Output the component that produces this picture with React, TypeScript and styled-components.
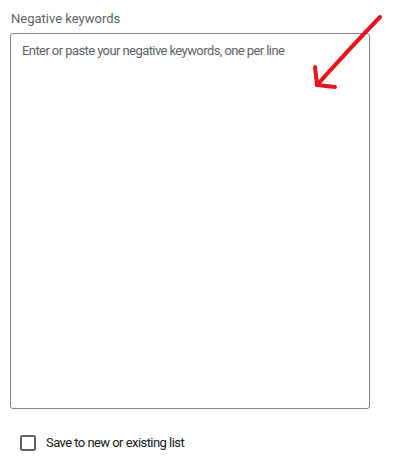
import styled, { createGlobalStyle } from "styled-components";

const GlobalStyle = createGlobalStyle`
  html, body {
    margin: 0;
    padding: 0;
    background: #ffffff;
    font-family: Roboto, "Liberation Sans", Arial, sans-serif;
  }
`;

const Page = styled.div`
  position: relative;
  width: 402px;
  height: 469px;
  overflow: hidden;
  background: #fff;
`;

const Field = styled.div`
  display: flex;
  flex-direction: column;
  padding: 11px 0 0 10px;
`;

const Label = styled.label`
  font-size: 13px;
  line-height: 16px;
  color: #5f6368;
  margin: 0 0 6px 1px;
`;

const TextArea = styled.textarea`
  box-sizing: border-box;
  width: 360px;
  height: 376px;
  margin: 0;
  padding: 9px 11px;
  border: 1px solid #80868b;
  border-radius: 3px;
  font-family: Roboto, "Liberation Sans", Arial, sans-serif;
  font-size: 13px;
  line-height: 16px;
  letter-spacing: -0.58px;
  color: #202124;
  resize: none;
  outline: none;

  &::placeholder {
    color: #5f6368;
    opacity: 1;
  }
`;

const CheckRow = styled.label`
  display: flex;
  align-items: center;
  gap: 10px;
  margin: 26px 0 0 20px;
  cursor: pointer;
`;

const Box = styled.span<{ $checked?: boolean }>`
  box-sizing: border-box;
  width: 16px;
  height: 16px;
  border: 2px solid #5f6368;
  border-radius: 2px;
  background: ${(p) => (p.$checked ? "#1a73e8" : "transparent")};
`;

const CheckText = styled.span`
  font-size: 13px;
  line-height: 16px;
  letter-spacing: -0.55px;
  color: #202124;
`;

const Annotation = styled.svg`
  position: absolute;
  left: 0;
  top: 0;
  pointer-events: none;
`;

export default function App() {
  return (
    <Page>
      <GlobalStyle />
      <Field>
        <Label htmlFor="neg">Negative keywords</Label>
        <TextArea
          id="neg"
          placeholder="Enter or paste your negative keywords, one per line"
        />
      </Field>
      <CheckRow>
        <Box />
        <CheckText>Save to new or existing list</CheckText>
      </CheckRow>
      {/* hand-drawn red arrow */}
      <Annotation width="402" height="469" viewBox="0 0 402 469">
        <g
          fill="none"
          stroke="#e5161d"
          strokeWidth="4"
          strokeLinecap="round"
          strokeLinejoin="round"
        >
          <path d="M380 17 Q352 46 317 85" />
          <path d="M315 67 L317 85 L335 87" />
        </g>
      </Annotation>
    </Page>
  );
}
